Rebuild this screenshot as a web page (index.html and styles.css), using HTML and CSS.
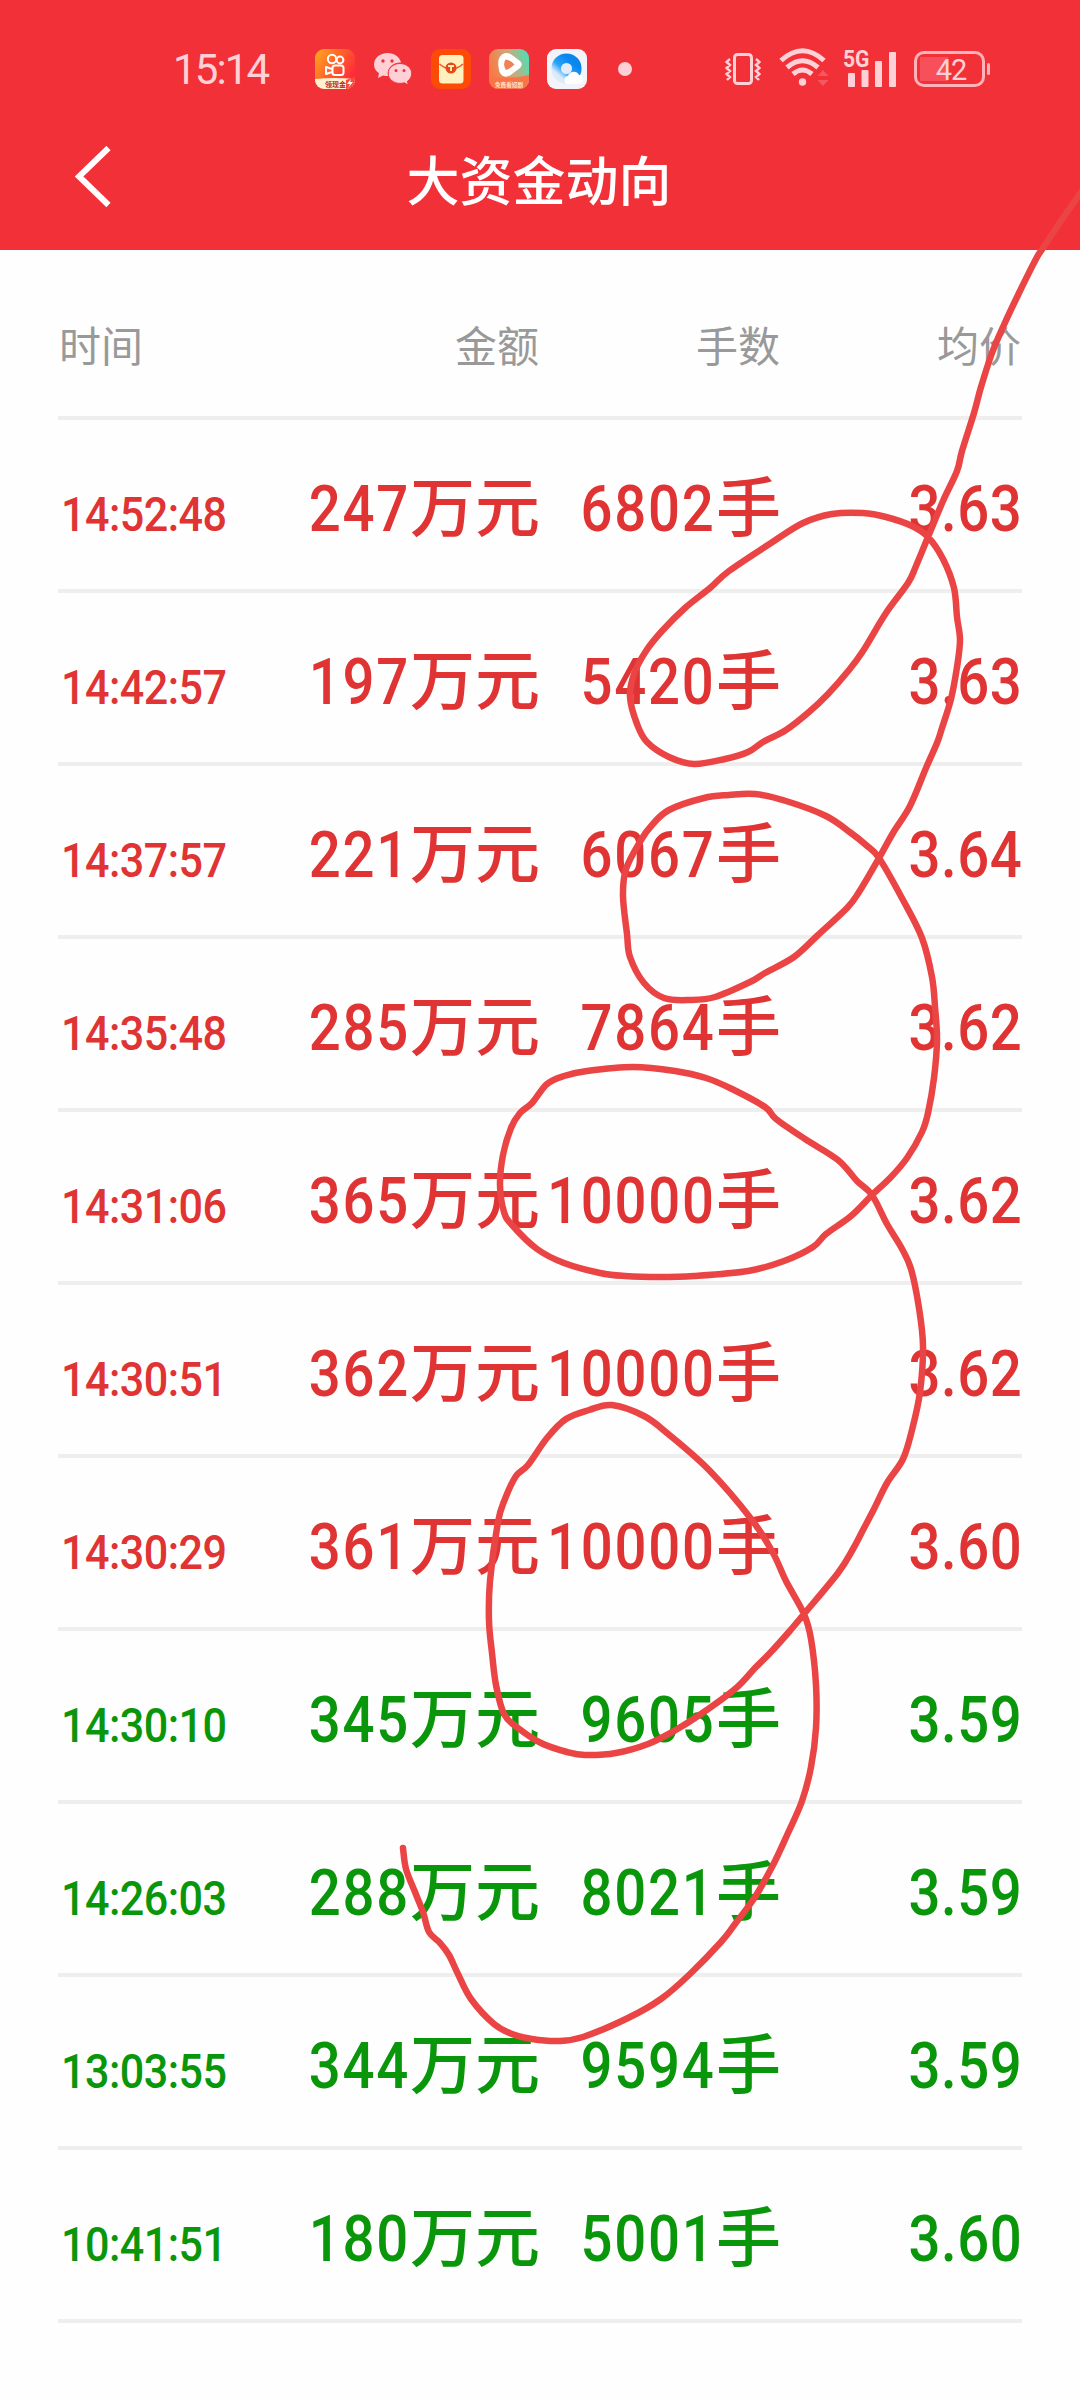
FILE: index.html
```html
<!DOCTYPE html>
<html lang="zh-CN">
<head>
  <meta charset="UTF-8" />
  <meta name="viewport" content="width=device-width, initial-scale=1.0" />
  <title>大资金动向</title>
  <link rel="stylesheet" href="styles.css">
</head>
<body>
  <div class="page">
    <header class="header">
      <!-- Status bar -->
      <div class="status-bar">
        <span class="clock">15:14</span>
        <div class="apps">
          <svg class="app" viewBox="0 0 40 40">
            <defs>
              <linearGradient id="kwai" x1="0" y1="0" x2="1" y2="0.6">
                <stop offset="0" stop-color="#ffac20" />
                <stop offset="0.5" stop-color="#ff6428" />
                <stop offset="1" stop-color="#ff2a3c" />
              </linearGradient>
              <clipPath id="round"><rect width="40" height="40" rx="9" /></clipPath>
            </defs>
            <g clip-path="url(#round)">
              <rect width="40" height="40" fill="url(#kwai)" />
              <path d="M0 30Q20 28 40 30V40H0z" fill="#fff0cf" />
              <path d="M31 40V31L40 28V40z" fill="#fb4a35" />
            </g>
            <g fill="none" stroke="#fff" stroke-width="2">
              <circle cx="17" cy="10" r="4.2" />
              <circle cx="25" cy="11" r="3.4" />
              <rect x="17.5" y="16.5" width="11" height="9.5" rx="2.5" />
              <path d="M17 20L11 18V25L17 23" stroke-linejoin="round" />
            </g>
            <text x="10" y="37.5" class="app-label kwai-label">领现金</text>
            <path d="M36 30L32 35H35L33 39L38 33H35z" fill="#fff" />
          </svg>
          <svg class="wechat" viewBox="0 0 38 32">
            <path d="M13.500 0C6 0 0 5 0 11.500c0 3.800 1.900 6.700 5 8.800L4 25l5-2.600c1.600.5 3 .6 5 .6C13 15 18 9.500 27 9.500 25.800 4 20.300 0 13.500 0z" />
            <path d="M26 10.500c-6.600 0-11.800 4.400-11.800 10S19.400 30.400 26 30.400c1.500 0 2.900-.2 4.200-.6L34.400 32l-1-3.700c2.700-1.900 4.300-4.500 4.300-7.800 0-5.600-5.200-10-11.700-10z" />
            <g class="eyes">
              <circle cx="9" cy="8" r="1.700" /><circle cx="18" cy="8" r="1.700" />
              <circle cx="22" cy="17.500" r="1.500" /><circle cx="30" cy="17.500" r="1.500" />
            </g>
          </svg>
          <svg class="app" viewBox="0 0 40 40">
            <rect width="40" height="40" rx="9" fill="#fc4b06" />
            <rect x="8" y="6" width="24.500" height="28.500" rx="3.500" fill="#fff0bd" />
            <path d="M8.500 15Q20 25 32 15" fill="none" stroke="#f05a1e" stroke-width="1.500" />
            <circle cx="20" cy="19" r="5.500" fill="#e84812" />
            <path d="M17 17H23M20 17V22" stroke="#fff0bd" stroke-width="1.800" />
          </svg>
          <svg class="app" viewBox="0 0 40 40">
            <defs>
              <linearGradient id="video" x1="0" y1="0.4" x2="1" y2="0.1">
                <stop offset="0" stop-color="#f77a45" />
                <stop offset="0.5" stop-color="#d1a677" />
                <stop offset="1" stop-color="#45e3bd" />
              </linearGradient>
            </defs>
            <g clip-path="url(#round)">
              <rect width="40" height="40" fill="url(#video)" />
              <path d="M0 27Q20 31 40 26V40H0z" fill="#fb7448" />
            </g>
            <path d="M13 5.500Q18 2.500 23 6L31 12Q34.500 15 31 19L21 26.500Q14 30 10.500 23Q7 10 13 5.500z" fill="#fff" />
            <path d="M16.500 10.500Q22 11 25.500 15.500Q21 20 17 21Q13.500 16 16.500 10.500z" fill="#f28052" />
            <text x="6" y="37.500" class="app-label video-label">免费看短剧</text>
          </svg>
          <svg class="app" viewBox="0 0 40 40">
            <defs>
              <linearGradient id="qq" x1="0.800" y1="0.200" x2="0.200" y2="0.900">
                <stop offset="0" stop-color="#0b86ee" />
                <stop offset="0.600" stop-color="#2ba3f7" />
                <stop offset="1" stop-color="#dcebfa" />
              </linearGradient>
            </defs>
            <rect width="40" height="40" rx="9" fill="#f3f4fa" />
            <circle cx="19.500" cy="19.500" r="10.300" fill="#e3edfa" stroke="url(#qq)" stroke-width="9.500" />
            <path d="M22 35a4 4 0 0 1-1-8 6 6 0 0 1 11-1 4.600 4.600 0 0 1 1 9z" fill="#fff" />
          </svg>
        </div>
        <span class="dot"></span>
        <div class="system">
          <svg class="vibrate" viewBox="0 0 36 32">
            <rect x="9.500" y="1.500" width="17" height="29" rx="3" />
            <path d="M5 6L1.500 9L5 12L1.500 15L5 18L1.500 21L5 24L2 27M31 6l3.500 3L31 12l3.500 3L31 18l3.500 3L31 24l3 3" />
          </svg>
          <svg class="wifi" viewBox="0 0 50 38">
            <path d="M2 12.500Q23.500-7 45 12.500M8 19.500Q23.500 6 39 19.500M14 26Q23.500 18 33 26" />
            <circle cx="23.500" cy="34" r="3.700" />
            <path class="traffic" d="M44 22l5.500 6h-11zM44 38l5.500-6h-11z" />
          </svg>
          <div class="signal">
            <span class="net">5G</span>
            <svg viewBox="0 0 48 36">
              <rect x="0" y="22" width="7" height="14" rx="1" />
              <rect x="13.500" y="19" width="7" height="17" rx="1" />
              <rect x="27" y="10" width="7" height="26" rx="1" />
              <rect x="41" y="1" width="7" height="35" rx="1" />
            </svg>
          </div>
          <div class="battery"><span>42</span></div>
        </div>
      </div>
      <!-- Title bar -->
      <div class="nav">
        <svg class="back" viewBox="0 0 36 62"><path d="M33.500 2L4 30.500L33.500 59" /></svg>
        <h1>大资金动向</h1>
      </div>
    </header>

    <main class="list">
      <div class="row head"><span>时间</span><span>金额</span><span>手数</span><span>均价</span></div>
      <div class="row up"><span class="time"><b>14:52:48</b></span><span><b>247</b><i>万元</i></span><span><b>6802</b><i>手</i></span><span class="price"><b>3.63</b></span></div>
      <div class="row up"><span class="time"><b>14:42:57</b></span><span><b>197</b><i>万元</i></span><span><b>5420</b><i>手</i></span><span class="price"><b>3.63</b></span></div>
      <div class="row up"><span class="time"><b>14:37:57</b></span><span><b>221</b><i>万元</i></span><span><b>6067</b><i>手</i></span><span class="price"><b>3.64</b></span></div>
      <div class="row up"><span class="time"><b>14:35:48</b></span><span><b>285</b><i>万元</i></span><span><b>7864</b><i>手</i></span><span class="price"><b>3.62</b></span></div>
      <div class="row up"><span class="time"><b>14:31:06</b></span><span><b>365</b><i>万元</i></span><span><b>10000</b><i>手</i></span><span class="price"><b>3.62</b></span></div>
      <div class="row up"><span class="time"><b>14:30:51</b></span><span><b>362</b><i>万元</i></span><span><b>10000</b><i>手</i></span><span class="price"><b>3.62</b></span></div>
      <div class="row up"><span class="time"><b>14:30:29</b></span><span><b>361</b><i>万元</i></span><span><b>10000</b><i>手</i></span><span class="price"><b>3.60</b></span></div>
      <div class="row down"><span class="time"><b>14:30:10</b></span><span><b>345</b><i>万元</i></span><span><b>9605</b><i>手</i></span><span class="price"><b>3.59</b></span></div>
      <div class="row down"><span class="time"><b>14:26:03</b></span><span><b>288</b><i>万元</i></span><span><b>8021</b><i>手</i></span><span class="price"><b>3.59</b></span></div>
      <div class="row down"><span class="time"><b>13:03:55</b></span><span><b>344</b><i>万元</i></span><span><b>9594</b><i>手</i></span><span class="price"><b>3.59</b></span></div>
      <div class="row down"><span class="time"><b>10:41:51</b></span><span><b>180</b><i>万元</i></span><span><b>5001</b><i>手</i></span><span class="price"><b>3.60</b></span></div>
    </main>

    <!-- Hand-drawn marker line over the list -->
    <svg class="marker" viewBox="0 0 1080 2400"><path id="markerPath" /></svg>
  </div>

  <script>
    const points = [
      [1084,188],[1063,218],[1043,248],[1036,259],[1019,293],[1003,327],[992,353],[981,387],[974,413],[962,451],[957,471],[943,501],[928,537],
      [916,566],[908,583],[886,613],[863,651],[849,670],[828,694],[809,712],[786,730],[763,742],[748,752],[725,759],[694,764],
      [669,757],[647,742],[637,724],[630,697],[634,674],[646,651],[662,631],[685,608],[710,588],[729,571],[771,543],[803,523],
      [832,514],[863,513],[886,517],[912,526],[928,537],[943,559],[954,588],[957,617],[960,640],[957,667],[951,699],[942,728],
      [937,743],[926,768],[910,806],[893,833],[879,858],[859,892],[847,908],[817,936],[794,957],[765,973],[750,982],[715,997],
      [690,1000],[664,998],[644,983],[630,957],[627,934],[623,896],[626,869],[641,840],[652,825],[669,810],[704,798],[729,795],
      [755,794],[786,801],[826,816],[851,833],[866,845],[879,858],[903,900],[922,938],[932,977],[935,1007],[937,1040],[934,1078],
      [928,1113],[922,1132],[907,1158],[891,1177],[872,1195],[851,1216],[826,1234],[813,1247],[784,1261],[748,1271],[694,1276],
      [660,1277],[625,1276],[600,1273],[564,1263],[537,1249],[512,1225],[504,1212],[500,1185],[503,1155],[511,1128],[520,1113],
      [532,1103],[547,1084],[564,1076],[587,1071],[633,1067],[675,1071],[706,1078],[732,1089],[765,1107],[776,1119],[805,1139],
      [838,1160],[857,1181],[872,1195],[887,1224],[901,1247],[911,1269],[919,1308],[923,1346],[920,1392],[912,1430],[903,1459],
      [887,1483],[874,1509],[863,1530],[853,1549],[838,1573],[804,1614],[788,1633],[770,1653],[755,1668],[735,1689],[701,1714],
      [674,1731],[648,1744],[616,1753],[585,1755],[567,1752],[541,1743],[518,1728],[504,1714],[496,1685],[492,1653],[489,1621],
      [490,1581],[498,1522],[505,1499],[516,1476],[528,1465],[547,1438],[566,1419],[589,1410],[612,1405],[644,1416],[667,1433],
      [709,1470],[752,1520],[773,1553],[786,1581],[804,1614],[811,1639],[816,1685],[816,1728],[811,1767],[802,1801],[788,1833],
      [773,1865],[755,1897],[735,1924],[721,1942],[690,1974],[661,1999],[628,2018],[583,2037],[558,2041],[532,2039],[512,2034],
      [494,2024],[471,1999],[458,1974],[449,1955],[440,1943],[429,1932],[423,1912],[415,1892],[406,1869],[403,1848]
    ];

    // Smooth the points into cubic segments.
    let d = `M${points[0]}`;
    for (let i = 0; i < points.length - 1; i++) {
      const p0 = points[i - 1] || points[i];
      const p1 = points[i];
      const p2 = points[i + 1];
      const p3 = points[i + 2] || p2;
      d += `C${p1[0] + (p2[0] - p0[0]) / 6},${p1[1] + (p2[1] - p0[1]) / 6} ${p2[0] - (p3[0] - p1[0]) / 6},${p2[1] - (p3[1] - p1[1]) / 6} ${p2}`;
    }
    document.getElementById("markerPath").setAttribute("d", d);
  </script>
</body>
</html>
```
FILE: styles.css
```css
* {
  margin: 0;
  padding: 0;
  box-sizing: border-box;
}
body {
  font-family: Roboto, "Noto Sans CJK SC", sans-serif;
  background: #fefefe;
}
.page {
  position: relative;
  width: 1080px;
  height: 2400px;
  overflow: hidden;
}
.header {
  height: 250px;
  background: #f23038;
}
/* Status bar */
.status-bar {
  display: flex;
  align-items: center;
  height: 138px;
  padding-left: 173px;
  color: #ffd0d5;
}
.clock {
  width: 142px;
  font-size: 42px;
  letter-spacing: -1.9px;
}
.apps {
  display: flex;
  align-items: center;
  gap: 18px;
}
.app {
  width: 40px;
  height: 40px;
}
.app-label {
  font-family: "Noto Sans CJK SC", sans-serif;
  font-weight: bold;
}
.kwai-label {
  font-size: 7px;
  fill: #b3291c;
}
.video-label {
  font-size: 5.6px;
  fill: #ffe6d0;
}
.wechat {
  width: 38px;
  height: 32px;
  margin: 0 1px;
  fill: #ffd0d5;
}
.wechat path + path {
  stroke: #f23038;
  stroke-width: 1;
}
.wechat .eyes {
  fill: #f23038;
}
.dot {
  width: 14px;
  height: 14px;
  margin-left: 31px;
  border-radius: 50%;
  background: #ffd0d5;
}
.system {
  display: flex;
  align-items: center;
  margin-left: 93px;
}
.vibrate {
  width: 36px;
  height: 32px;
  fill: none;
  stroke: #ffd0d5;
  stroke-width: 3;
}
.vibrate path {
  stroke-width: 2.4;
}
.wifi {
  width: 50px;
  height: 38px;
  margin: 0 0 4px 18px;
  fill: #ffd0d5;
}
.wifi path {
  fill: none;
  stroke: #ffd0d5;
  stroke-width: 5;
}
.wifi .traffic {
  fill: #f7575f;
  stroke: none;
}
.signal {
  position: relative;
  height: 36px;
  margin-left: 19px;
}
.signal svg {
  width: 48px;
  height: 36px;
  fill: #ffd0d5;
}
.net {
  position: absolute;
  left: -5px;
  top: -4px;
  font-size: 24px;
  line-height: 24px;
  font-weight: bold;
  transform: scaleX(0.88);
  transform-origin: left;
}
.battery {
  position: relative;
  width: 71px;
  height: 36px;
  margin-left: 18px;
  border: 3px solid #ffb3b8;
  border-radius: 10px;
  background: linear-gradient(90deg, #f7505a 28px, transparent 28px) 3px 3px no-repeat;
  background-size: 60px 24px;
  font-size: 29px;
  line-height: 32px;
  text-align: center;
}
.battery span {
  margin-left: 3px;
  letter-spacing: -1px;
}
.battery::after {
  content: "";
  position: absolute;
  right: -8px;
  top: 9px;
  width: 3px;
  height: 12px;
  border-radius: 2px;
  background: #ffb3b8;
}
/* Title bar */
.nav {
  display: grid;
  grid-template-columns: 1fr auto 1fr;
  align-items: center;
  height: 80px;
  padding-left: 75px;
}
.nav h1 {
  grid-column: 2;
  margin-left: -77px;
  padding-top: 11px;
  font-size: 53px;
  line-height: 69px;
  font-weight: 500;
  color: #fff;
}
.back {
  width: 36px;
  height: 62px;
  margin-top: -2px;
  fill: none;
  stroke: #fff;
  stroke-width: 6;
}
/* List */
.list {
  padding: 0 58px;
}
.row {
  display: grid;
  grid-template-columns: repeat(4, 1fr);
  align-items: baseline;
  height: 173px;
  padding-top: 41px;
  border-bottom: 4px solid #eee;
  font-size: 64px;
  line-height: 96px;
  font-weight: 500;
  text-align: right;
  white-space: nowrap;
}
.row span:first-child {
  padding-left: 2px;
  text-align: left;
}
/* Narrow digits */
.row b {
  display: inline-block;
  margin-left: -40px;
  font-weight: 500;
  letter-spacing: 2px;
  transform: scaleX(0.88);
  transform-origin: right;
}
.row i {
  font-size: 65px;
  font-style: normal;
}
.row .price b {
  letter-spacing: 0.6px;
}
.row .time b {
  margin-left: 1px;
  font-size: 49px;
  letter-spacing: -0.6px;
  transform-origin: left;
}
.head {
  height: 170px;
  padding-top: 50px;
  font-size: 42px;
  font-weight: 400;
  color: #999;
}
.head span {
  position: relative;
  left: -1px;
}
.up {
  color: #e03333;
}
.down {
  color: #0a960a;
}
.marker {
  position: absolute;
  left: 0;
  top: 0;
  width: 1080px;
  height: 2400px;
  fill: none;
  stroke: #eb4444;
  stroke-width: 6.5;
  stroke-linecap: round;
  stroke-linejoin: round;
}
```
